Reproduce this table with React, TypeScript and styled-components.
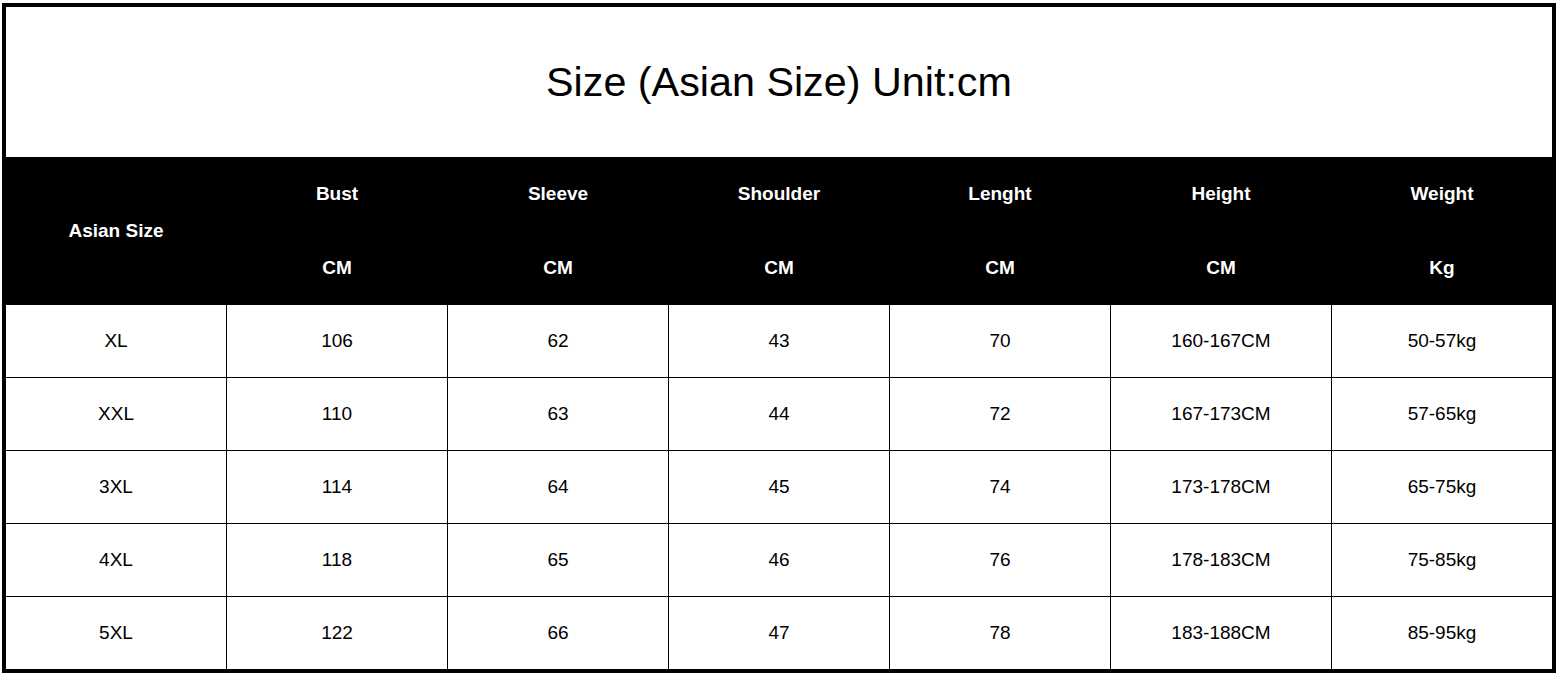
import styled, { createGlobalStyle } from "styled-components";

const GlobalStyle = createGlobalStyle`
  html, body {
    margin: 0;
    padding: 0;
    background: #ffffff;
  }
  body {
    font-family: "Liberation Sans", Arial, sans-serif;
  }
`;

const columns = [
  { name: "Bust", unit: "CM" },
  { name: "Sleeve", unit: "CM" },
  { name: "Shoulder", unit: "CM" },
  { name: "Lenght", unit: "CM" },
  { name: "Height", unit: "CM" },
  { name: "Weight", unit: "Kg" },
];

const rows = [
  ["XL", "106", "62", "43", "70", "160-167CM", "50-57kg"],
  ["XXL", "110", "63", "44", "72", "167-173CM", "57-65kg"],
  ["3XL", "114", "64", "45", "74", "173-178CM", "65-75kg"],
  ["4XL", "118", "65", "46", "76", "178-183CM", "75-85kg"],
  ["5XL", "122", "66", "47", "78", "183-188CM", "85-95kg"],
];

const App = () => {
  return (
    <>
      <GlobalStyle />
      <Frame>
        <Title>Size (Asian Size) Unit:cm</Title>

        <Header>
          <HeadCell $span>Asian Size</HeadCell>
          {columns.map((col) => (
            <HeadCell key={col.name}>{col.name}</HeadCell>
          ))}
          {columns.map((col) => (
            <HeadCell key={col.name + "-unit"}>{col.unit}</HeadCell>
          ))}
        </Header>

        <Body>
          {rows.map((row) =>
            row.map((value, i) => <Cell key={row[0] + i}>{value}</Cell>)
          )}
        </Body>
      </Frame>
    </>
  );
};

export default App;

const Frame = styled.div`
  box-sizing: border-box;
  width: 1554px;
  height: 670px;
  margin: 3px 0 0 2px;
  border: 4px solid #000000;
  display: flex;
  flex-direction: column;
  background: #ffffff;
`;

const Title = styled.div`
  height: 150px;
  display: flex;
  align-items: center;
  justify-content: center;
  font-size: 41.3px;
  color: #000000;
`;

const Header = styled.div`
  height: 148px;
  display: grid;
  grid-template-columns: repeat(7, 1fr);
  grid-template-rows: 74px 74px;
  column-gap: 1px;
  background: #000000;
`;

const HeadCell = styled.div<{ $span?: boolean }>`
  display: flex;
  align-items: center;
  justify-content: center;
  grid-row: ${(props) => (props.$span ? "1 / span 2" : "auto")};
  color: #ffffff;
  font-weight: bold;
  font-size: 19px;
  background: #000000;
`;

const Body = styled.div`
  display: grid;
  grid-template-columns: repeat(7, 1fr);
  grid-auto-rows: 72px;
  gap: 1px;
  background: #000000;
`;

const Cell = styled.div`
  display: flex;
  align-items: center;
  justify-content: center;
  background: #ffffff;
  color: #000000;
  font-size: 19px;
`;
